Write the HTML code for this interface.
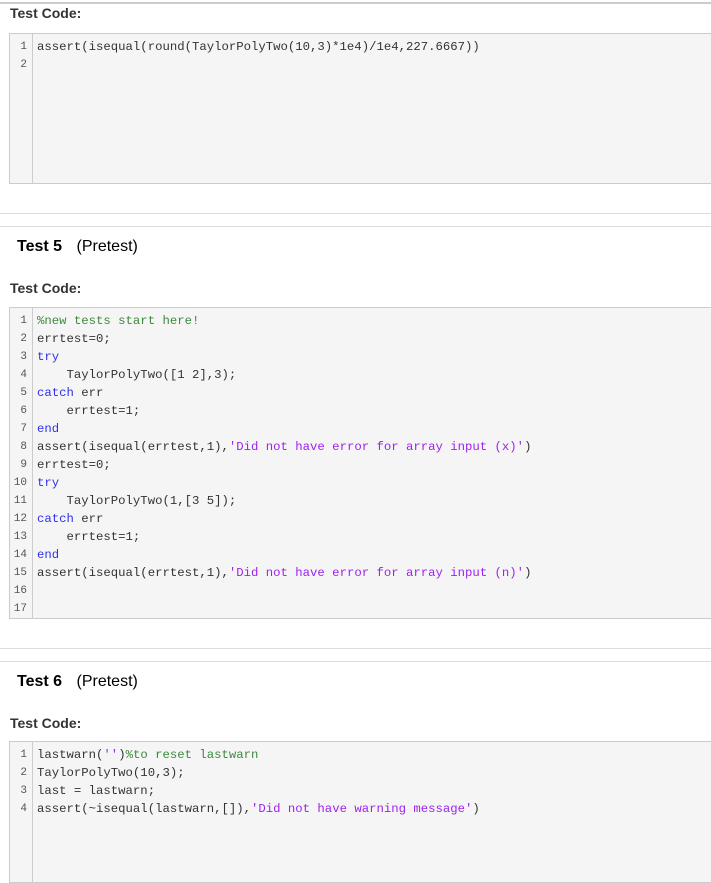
<!DOCTYPE html><html><head><style>
body{margin:0;width:711px;height:871px;overflow:hidden;background:#fff;font-family:"Liberation Sans",sans-serif;position:relative}
.abs{position:absolute}
.h{font-weight:bold;font-size:14px;color:#333;left:10px}
.t{font-size:16px;color:#000;left:17px}
.t b{margin-right:10px}
.box{position:absolute;left:9px;right:0;background:#f5f5f5;border:1px solid #ccc;border-right:none;overflow:hidden}
.g{position:absolute;left:0;top:0;bottom:0;width:22px;border-right:1px solid #ccc}
.code{position:absolute;left:0;right:0;top:4px;font-family:"Liberation Mono",monospace;font-size:12.3px;line-height:18px;color:#333}
.code div{position:relative;height:18px}
.code i{font-style:normal;position:absolute;left:0;width:17px;text-align:right;font-size:11px;color:#555}
.code span.c{position:absolute;left:27px;white-space:pre}
.k{color:#3030ee}.s{color:#a020f0}.m{color:#3c8a3c}
.ln{position:absolute;left:0;right:0;height:1px;background:#ddd}
</style></head><body>
<div class="ln" style="top:2px;height:2px;background:#ccc"></div>
<div class="abs h" style="top:5px">Test Code:</div>
<div class="box" style="top:33px;height:149px"><div class="g"></div><div class="code"><div><i>1</i><span class="c">assert(isequal(round(TaylorPolyTwo(10,3)*1e4)/1e4,227.6667))</span></div><div><i>2</i></div></div></div>
<div class="ln" style="top:213px"></div><div class="ln" style="top:226px"></div>
<div class="abs t" style="top:238px"><b>Test 5</b> (Pretest)</div>
<div class="abs h" style="top:280px">Test Code:</div>
<div class="box" style="top:307px;height:310px"><div class="g"></div><div class="code"><div><i>1</i><span class="c m">%new tests start here!</span></div><div><i>2</i><span class="c">errtest=0;</span></div><div><i>3</i><span class="c k">try</span></div><div><i>4</i><span class="c">    TaylorPolyTwo([1 2],3);</span></div><div><i>5</i><span class="c"><span class="k">catch</span> err</span></div><div><i>6</i><span class="c">    errtest=1;</span></div><div><i>7</i><span class="c k">end</span></div><div><i>8</i><span class="c">assert(isequal(errtest,1),<span class="s">'Did not have error for array input (x)'</span>)</span></div><div><i>9</i><span class="c">errtest=0;</span></div><div><i>10</i><span class="c k">try</span></div><div><i>11</i><span class="c">    TaylorPolyTwo(1,[3 5]);</span></div><div><i>12</i><span class="c"><span class="k">catch</span> err</span></div><div><i>13</i><span class="c">    errtest=1;</span></div><div><i>14</i><span class="c k">end</span></div><div><i>15</i><span class="c">assert(isequal(errtest,1),<span class="s">'Did not have error for array input (n)'</span>)</span></div><div><i>16</i></div><div><i>17</i></div></div></div>
<div class="ln" style="top:648px"></div><div class="ln" style="top:661px"></div>
<div class="abs t" style="top:673px"><b>Test 6</b> (Pretest)</div>
<div class="abs h" style="top:715px">Test Code:</div>
<div class="box" style="top:741px;height:140px"><div class="g"></div><div class="code"><div><i>1</i><span class="c">lastwarn(<span class="s">''</span>)<span class="m">%to reset lastwarn</span></span></div><div><i>2</i><span class="c">TaylorPolyTwo(10,3);</span></div><div><i>3</i><span class="c">last = lastwarn;</span></div><div><i>4</i><span class="c">assert(~isequal(lastwarn,[]),<span class="s">'Did not have warning message'</span>)</span></div></div></div>
</body></html>
